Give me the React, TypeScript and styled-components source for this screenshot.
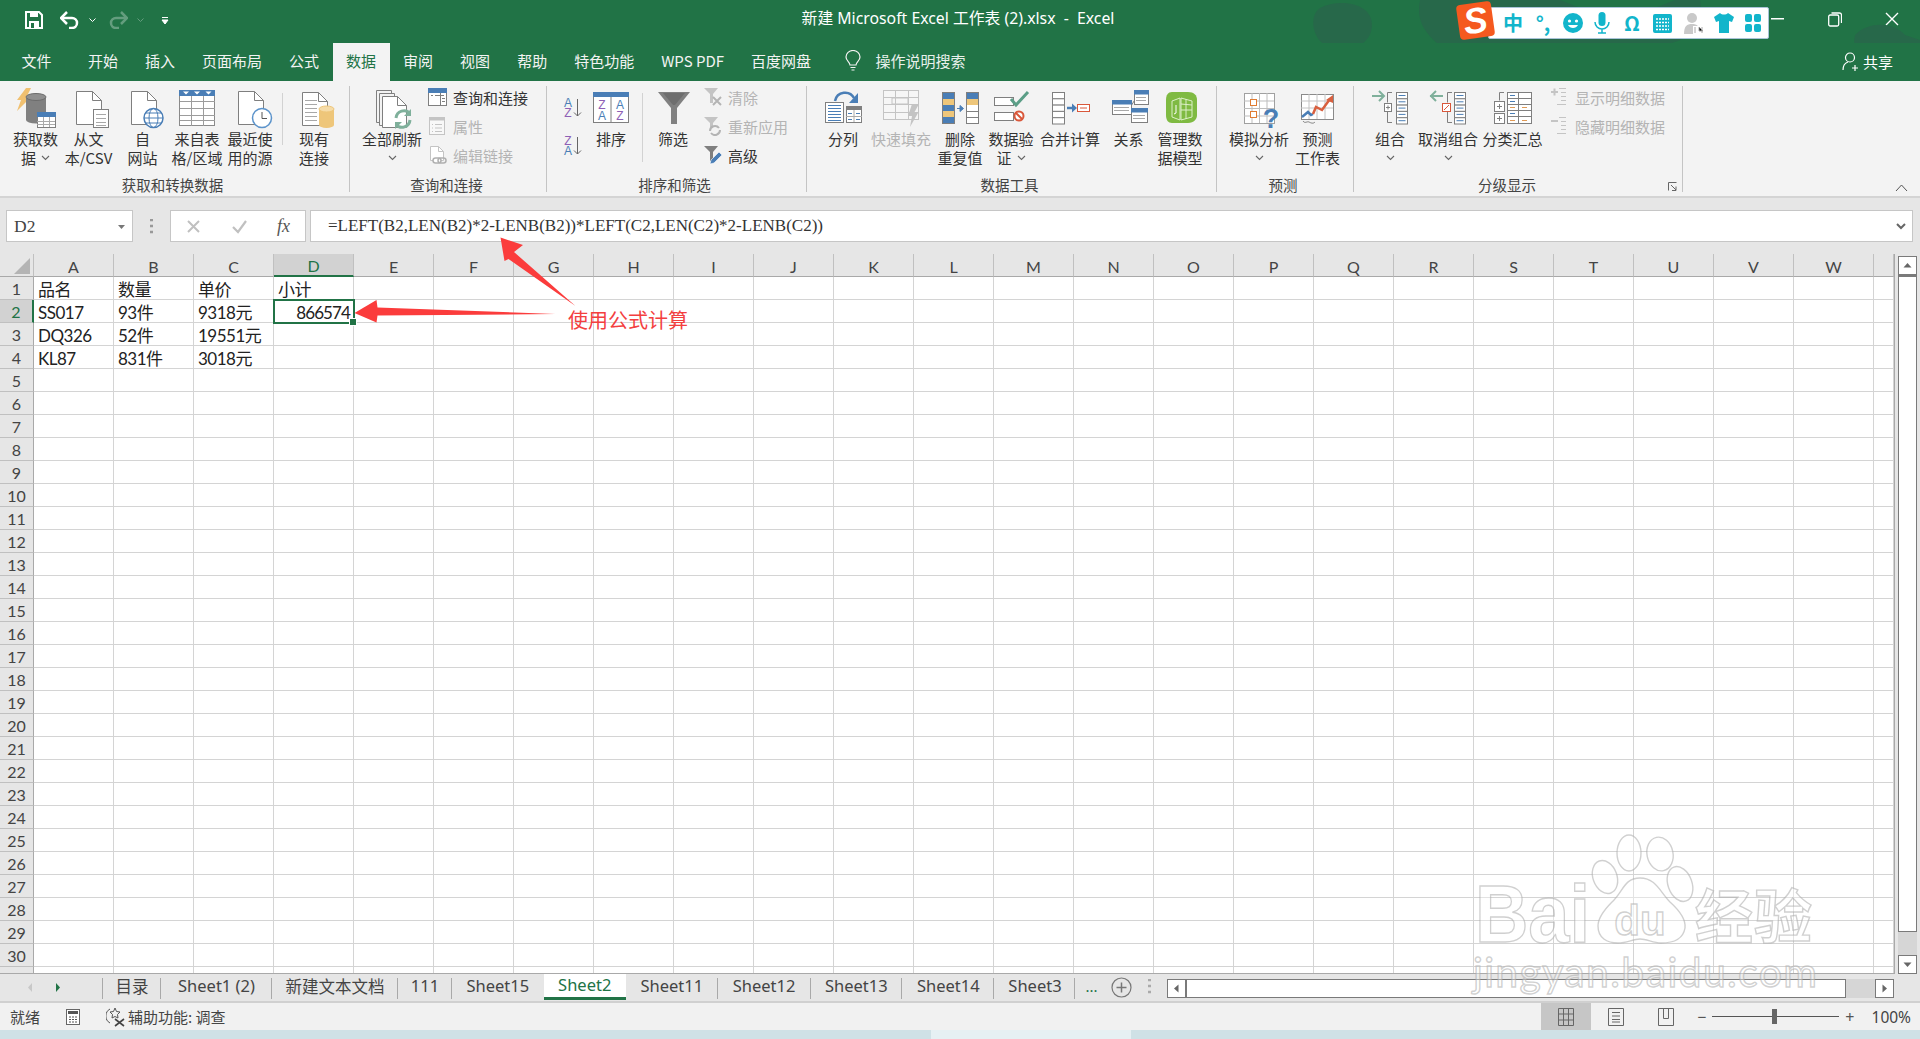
import React from "react";
import styled, { createGlobalStyle } from "styled-components";

const CJK = `"Noto Sans CJK SC", "Noto Sans", sans-serif`;
const GREEN = "#217346";
const G = "#7f7f7f";
const B = "#4a7eb6";
const Y = "#eec67a";
const P = "#8e5fb5";
const LG = "#c4c4c4";

const Global = createGlobalStyle`
  html, body { margin: 0; padding: 0; background: #e6e6e6; }
  #root { width: 1920px; height: 1039px; }
`;

const Page = styled.div`
  position: relative; width: 1920px; height: 1039px; overflow: hidden;
  display: flex; flex-direction: column; font-family: ${CJK}; color: #333; background: #e6e6e6;
`;
const TitleBar = styled.div`
  position: relative; height: 43px; flex: none; background: ${GREEN}; display: flex; align-items: center; color: #fff;
`;
const Qat = styled.div`flex: 1; display: flex; align-items: center; padding-bottom: 3px;`;
const QatIcon = styled.svg<{ $ml: number }>`margin-left: ${(p) => p.$ml}px; flex: none; display: block;`;
const TitleText = styled.div`font-size: 15.8px; padding: 0 4px 8px 0; white-space: pre; font-family: "Noto Sans", ${CJK};`;
const WindowControls = styled.div`flex: 1; display: flex; justify-content: flex-end; align-items: center; padding-bottom: 5px;`;
const WinBtn = styled.div`width: 57px; display: flex; justify-content: center;`;
const Blobs = styled.svg`position: absolute; left: 1280px; top: 0; pointer-events: none;`;

const TabsRow = styled.div`
  height: 38px; flex: none; background: ${GREEN}; display: flex; align-items: stretch; padding-left: 8px; position: relative; color: #f3f3f3;
`;
const RibbonTab = styled.div<{ $active?: boolean; $first?: boolean }>`
  padding: 0 13.5px 3px; font-size: 15px; display: flex; align-items: center; white-space: nowrap;
  margin-right: ${(p) => (p.$first ? 9.5 : 0)}px;
  background: ${(p) => (p.$active ? "#f3f3f3" : "transparent")};
  color: ${(p) => (p.$active ? GREEN : "#f3f3f3")};
`;
const SearchHint = styled.div`
  margin-left: 20px; display: flex; align-items: center; gap: 15px; font-size: 15px; color: #e9f1ec; padding-bottom: 3px;
`;
const Share = styled.div`
  margin-left: auto; display: flex; align-items: center; gap: 3px; font-size: 15px; padding-right: 27px; color: #fff; padding-bottom: 1px;
`;

const Ribbon = styled.div`
  height: 117px; flex: none; box-sizing: border-box; background: #f3f3f3; border-bottom: 2px solid #d4d4d4;
  display: flex; padding-top: 5px;
`;
const Group = styled.div<{ $w: number; $pl: number }>`
  position: relative; width: ${(p) => p.$w}px; height: 106px; box-sizing: border-box; flex: none;
  border-right: 1px solid #c4c4c4; padding-left: ${(p) => p.$pl}px; display: flex; flex-direction: column;
`;
const GroupBody = styled.div`height: 88.5px; display: flex; flex: none; align-items: flex-start;`;
const GroupLabel = styled.div<{ $pr: number; $pl: number }>`
  height: 20px; line-height: 20px; text-align: center; font-size: 14.5px; color: #444; white-space: nowrap;
  margin-left: ${(p) => -p.$pl}px; padding-right: ${(p) => p.$pr}px;
`;
const Large = styled.div<{ $w: number }>`
  width: ${(p) => p.$w}px; flex: none; display: flex; flex-direction: column; align-items: center;
`;
const LargeIcon = styled.svg`display: block; overflow: visible; flex: none; margin-bottom: -1px;`;
const Line = styled.div<{ $off?: boolean }>`
  height: 19px; line-height: 19px; font-size: 15px; white-space: nowrap; display: flex; align-items: center; gap: 5px;
  color: ${(p) => (p.$off ? "#b4b4b4" : "#333")};
`;
const SmallCol = styled.div<{ $w: number; $ml?: number }>`
  width: ${(p) => p.$w}px; margin-left: ${(p) => p.$ml ?? 0}px; margin-top: -3.5px; flex: none; display: flex; flex-direction: column;
`;
const SmallRow = styled.div<{ $off?: boolean }>`
  height: 29px; display: flex; align-items: center; font-size: 15px; white-space: nowrap;
  color: ${(p) => (p.$off ? "#b4b4b4" : "#333")};
`;
const SmallIconBox = styled.div`width: 25px; flex: none; display: flex; align-items: center;`;
const GroupDivider = styled.div<{ $ml: number; $h: number }>`
  width: 1px; height: ${(p) => p.$h}px; margin: 7px 0 0 ${(p) => p.$ml}px; background: #d2d2d2; flex: none;
`;
const SortCol = styled.div`width: 34px; flex: none; display: flex; flex-direction: column; align-items: center;`;
const SortGap = styled.div<{ $h: number }>`height: ${(p) => p.$h}px; flex: none;`;
const Launcher = styled.svg`position: absolute; right: 5px; bottom: 1px;`;
const RibbonRest = styled.div`flex: 1; display: flex; justify-content: flex-end; align-items: flex-end; padding: 0 12px 4px 0;`;

const FormulaArea = styled.div`
  height: 56px; flex: none; box-sizing: border-box; padding: 12px 7px 12px 6px; display: flex; background: #e6e6e6;
`;
const NameBox = styled.div`
  width: 127px; box-sizing: border-box; background: #fff; border: 1px solid #c6c6c6; display: flex; align-items: center;
  justify-content: space-between; padding: 0 6px 0 7px; font: 17.5px "Liberation Serif", serif; color: #444;
`;
const Dots = styled.div`width: 37px; display: flex; justify-content: center; align-items: center;`;
const FxBox = styled.div`
  width: 136px; box-sizing: border-box; background: #fff; border: 1px solid #c6c6c6; display: flex; align-items: center;
  justify-content: space-between; padding: 0 15px 0 15px; color: #bbb;
`;
const FxMark = styled.span`font: italic 18px "Liberation Serif", serif; color: #555;`;
const FormulaInput = styled.div`
  flex: 1; margin-left: 4px; box-sizing: border-box; background: #fff; border: 1px solid #c6c6c6; display: flex; align-items: center;
  justify-content: space-between; padding: 0 6px 0 17px; font: 17px "Liberation Serif", serif; color: #333; white-space: nowrap;
`;

const SheetArea = styled.div`height: 720px; flex: none; display: flex; background: #e6e6e6;`;
const Sheet = styled.div`
  width: 1895px; height: 720px; flex: none; overflow: hidden; display: grid; box-sizing: border-box;
  grid-template-columns: 34px repeat(23, 80px) 20px; grid-template-rows: 23px repeat(31, 23px);
  border-right: 1px solid #a9a9a9; border-bottom: 1px solid #a9a9a9;
  font-family: Lato, ${CJK};
`;
const Corner = styled.div`position: relative; background: #e6e6e6; border-bottom: 1px solid #a9a9a9; border-right: 1px solid #c0c0c0;`;
const CornerMark = styled.svg`position: absolute; left: 14px; top: 4px;`;
const ColHead = styled.div<{ $sel?: boolean }>`
  box-sizing: border-box; display: flex; align-items: center; justify-content: center; font-size: 16px; padding-top: 2px;
  border-right: 1px solid #c0c0c0;
  border-bottom: ${(p) => (p.$sel ? `2px solid ${GREEN}` : "1px solid #a9a9a9")};
  background: ${(p) => (p.$sel ? "#d2d2d2" : "#e6e6e6")};
  color: ${(p) => (p.$sel ? GREEN : "#444")};
`;
const RowHead = styled.div<{ $sel?: boolean }>`
  box-sizing: border-box; display: flex; align-items: center; justify-content: center; font-size: 16px;
  border-bottom: 1px solid #c0c0c0;
  border-right: ${(p) => (p.$sel ? `2px solid ${GREEN}` : "1px solid #a9a9a9")};
  background: ${(p) => (p.$sel ? "#d2d2d2" : "#e6e6e6")};
  color: ${(p) => (p.$sel ? GREEN : "#444")};
`;
const Cell = styled.div<{ $active?: boolean }>`
  position: relative; box-sizing: border-box; background: #fff; border-right: 1px solid #d4d4d4; border-bottom: 1px solid #d4d4d4;
  font-size: 17px; letter-spacing: -0.5px; line-height: 25px; padding: 0 3px 0 4px; white-space: nowrap; color: #222;
  ${(p) => (p.$active ? `text-align: right; letter-spacing: -0.9px; outline: 2px solid ${GREEN}; outline-offset: -1px; z-index: 2;` : "")}
`;
const FillHandle = styled.div`
  position: absolute; right: -4px; bottom: -4px; width: 6px; height: 6px; background: ${GREEN}; border: 1px solid #fff;
`;
const VScroll = styled.div`width: 25px; flex: none; padding: 2px 3px 0 3px; box-sizing: border-box; display: flex; flex-direction: column;`;
const ScrollBtn = styled.div`
  width: 19px; height: 19px; flex: none; box-sizing: border-box; background: #fff; border: 1px solid #7a7a7a; display: flex; align-items: center; justify-content: center;
`;
const VThumb = styled.div`height: 657px; flex: none; box-sizing: border-box; background: #fff; border: 1px solid #7a7a7a; border-top-width: 2px;`;
const VTrack = styled.div`flex: 1; background: #d6d6d6;`;

const TabBar = styled.div`
  height: 29px; flex: none; box-sizing: border-box; display: flex; align-items: flex-start; background: #e6e6e6; border-bottom: 2px solid #d0d0d0;
`;
const TabNav = styled.div`width: 102px; flex: none; height: 26px; display: flex; align-items: center; gap: 19px; padding-left: 26px; box-sizing: border-box;`;
const SheetTab = styled.div<{ $w: number; $active?: boolean; $sep?: boolean }>`
  width: ${(p) => p.$w}px; flex: none; box-sizing: border-box; height: 26px; display: flex; align-items: center; justify-content: center;
  font: 16.5px "Noto Sans", ${CJK}; white-space: nowrap; position: relative; padding-bottom: 3px; color: ${(p) => (p.$active ? GREEN : "#444")};
  background: ${(p) => (p.$active ? "#fff" : "transparent")};
  border-bottom: ${(p) => (p.$active ? `3px solid ${GREEN}` : "0")};
  &::after {
    content: ""; position: absolute; right: 0; top: 4px; height: 21px; width: 1px; background: ${(p) => (p.$sep ? "#a9a9a9" : "transparent")};
  }
`;
const TabStart = styled.div`width: 1px; height: 21px; margin-top: 4px; background: #a9a9a9; flex: none;`;
const More = styled.div`margin-left: 10px; width: 16px; font: 15px "Noto Sans", sans-serif; color: ${GREEN}; padding-top: 2px; flex: none;`;
const AddSheet = styled.svg`margin: 3px 0 0 10px; flex: none;`;
const TabGrip = styled.svg`margin: 5px 0 0 16px; flex: none;`;
const HScroll = styled.div`margin: 5px 0 0 16px; width: 727px; height: 19px; display: flex; flex: none;`;
const HThumb = styled.div`width: 660px; flex: none; box-sizing: border-box; background: #fff; border: 1px solid #7a7a7a;`;
const HTrack = styled.div`flex: 1; background: #d6d6d6;`;

const StatusBar = styled.div`
  height: 27px; flex: none; background: #f1f1f1; display: flex; align-items: center; font-size: 15px; color: #444;
`;
const StatusText = styled.span<{ $ml: number }>`margin-left: ${(p) => p.$ml}px; white-space: nowrap;`;
const StatusIcon = styled.svg<{ $ml: number }>`margin-left: ${(p) => p.$ml}px; flex: none;`;
const StatusRight = styled.div`margin-left: auto; display: flex; align-items: center; height: 100%;`;
const ViewBtn = styled.div<{ $on?: boolean }>`
  width: 50px; height: 100%; display: flex; align-items: center; justify-content: center; background: ${(p) => (p.$on ? "#c6c6c6" : "transparent")};
`;
const ZoomSlider = styled.div`
  margin: 0 0 0 6px; display: flex; align-items: center; font: 16px "Noto Sans", sans-serif; gap: 6px; color: #555;
`;
const SliderTrack = styled.div`position: relative; width: 127px; height: 1px; background: #555;`;
const SliderThumb = styled.div`position: absolute; left: 60px; top: -7px; width: 5px; height: 15px; background: #666;`;
const ZoomPct = styled.span`margin: 0 9px 0 17px; font: 15.5px "Noto Sans", sans-serif; color: #444;`;

const Desktop = styled.div`flex: 1; display: flex; background: #cfe1e6;`;
const DesktopLight = styled.div`width: 200px; margin-left: 931px; background: #e6f0f3;`;

const IME = styled.div`
  position: absolute; left: 1488px; top: 7px; width: 281px; height: 32px; box-sizing: border-box; background: #fff; border: 1px solid #a9c4d8; border-radius: 2px;
  display: flex; align-items: center; padding-left: 9px; color: #12b5cb; z-index: 5;
`;
const ImeLogo = styled.div`
  position: absolute; left: 1458px; top: 3px; width: 35px; height: 35px; border-radius: 4px; transform: rotate(-8deg); background: #f5591f;
  z-index: 6; color: #fff; font: italic 900 36px "Liberation Sans", sans-serif; display: flex; align-items: center; justify-content: center;
`;
const ImeSlot = styled.div<{ $w: number }>`
  width: ${(p) => p.$w}px; flex: none; display: flex; align-items: center; justify-content: center; font: 700 20px ${CJK}; line-height: 24px;
`;
const Annotation = styled.svg`position: absolute; left: 0; top: 0; pointer-events: none; z-index: 8;`;
const AnnotationLabel = styled.div`
  position: absolute; left: 568px; top: 305px; font-size: 20px; line-height: 30px; color: #f33f3f; white-space: nowrap; z-index: 8;
`;

const Chev = () => (
  <svg width="9" height="6" viewBox="0 0 9 6"><path d="M1 1l3.5 3.5L8 1" fill="none" stroke="#666" strokeWidth="1.1" /></svg>
);

const Ic = ({ x, w, children }: { x: number; w: number; children: React.ReactNode }) => (
  <LargeIcon width={w} height={44} viewBox={`${x} 86 ${w} 44`}>{children}</LargeIcon>
);

const Doc = ({ x, y = 91, w = 25, h = 33, s = G }: any) => (
  <g fill="#fff" stroke={s}>
    <path d={`M${x + 0.5} ${y + 0.5}h${w - 9}l9 9v${h - 9}h-${w}z`} />
    <path d={`M${x + w - 8.5} ${y + 0.5}v9h9`} fill="none" />
  </g>
);
const Rows = ({ x, y, w, ys, c = "#a8a8a8" }: any) => (
  <g stroke={c}>{ys.map((d: number) => <path key={d} d={`M${x} ${y + d + 0.5}h${w}`} />)}</g>
);
const MiniTable = ({ x, y, w, h, head = B }: any) => (
  <g>
    <rect x={x + 0.5} y={y + 0.5} width={w} height={h} fill="#fff" stroke={G} />
    <rect x={x} y={y} width={w + 1} height="4.5" fill={head} />
  </g>
);
const Stack = ({ x, y, w, cells }: any) => (
  <g>{cells.map((c: string, i: number) => <rect key={i} x={x + 0.5} y={y + i * 6.3 + 0.5} width={w} height="6.3" fill={c} stroke={G} />)}</g>
);
const Outline = ({ x }: { x: number }) => (
  <g>
    <Stack x={x} y={92} w={11} cells={["#fff", "#fff", "#fff", "#fff", "#fff"]} />
    {[0, 1, 2, 3, 4].map((i) => <path key={i} d={`M${x + 2.5} ${95.5 + i * 6.3}h7`} stroke={B} />)}
  </g>
);

const icons: Record<string, React.ReactNode> = {
  getData: (
    <Ic x={9} w={53}>
      <path d="M26 88h5l-5 10h4L17 111l4-11h-4z" fill="#f0c070" />
      <path d="M26 98v22a10 3.5 0 0 0 20 0V98z" fill="#808080" />
      <ellipse cx="36" cy="97" rx="10" ry="3.5" fill="#8f8f8f" stroke="#6c6c6c" />
      <rect x="37.5" y="112.5" width="18" height="15" fill="#fff" stroke={G} />
      <rect x="37" y="112" width="19" height="5" fill={B} />
      <path d="M37 121.5h18M37 124.5h18M43.5 117v10M49.5 117v10" stroke="#aaa" />
    </Ic>
  ),
  fromText: (
    <Ic x={62} w={53}>
      <Doc x={76} />
      <rect x="93.5" y="109.5" width="15" height="18" fill="#fff" stroke={G} />
      <Rows x={96} y={113} w={10} ys={[1, 5, 9, 12]} />
    </Ic>
  ),
  web: (
    <Ic x={115} w={55}>
      <Doc x={131} />
      <circle cx="153.5" cy="118" r="9.5" fill="#fff" stroke={B} strokeWidth="1.5" />
      <ellipse cx="153.5" cy="118" rx="4.5" ry="9.5" fill="none" stroke={B} />
      <path d="M144 118h19M145.5 113h16M145.5 123h16" stroke={B} />
    </Ic>
  ),
  table: (
    <Ic x={170} w={54}>
      <rect x="179.5" y="90.5" width="35" height="35" fill="#fff" stroke="#8a8a8a" />
      <rect x="179" y="90" width="36" height="6" fill={B} />
      <path d="M183 91.5h6l-3 3zM194 91.5h6l-3 3zM205.500 91.5h6l-3 3z" fill="#fff" />
      <path d="M191.500 96v30M203.500 96v30M180 101.500h35M180 108.500h35M180 115.500h35M180 120.500h35" stroke="#9c9c9c" />
    </Ic>
  ),
  recent: (
    <Ic x={224} w={52}>
      <Doc x={238} />
      <circle cx="262" cy="118" r="9.500" fill="#fff" stroke="#5b93cb" strokeWidth="1.5" />
      <path d="M262 112v6.500h5" fill="none" stroke="#555" />
    </Ic>
  ),
  existing: (
    <Ic x={283} w={62}>
      <Doc x={302} y={92} />
      <Rows x={305} y={100} w={12} ys={[0, 4, 8, 12, 16, 20]} />
      <path d="M319 110v15a7.500 3 0 0 0 15 0v-15z" fill={Y} />
      <ellipse cx="326.500" cy="109" rx="7.500" ry="3" fill="#f6dca8" stroke={Y} />
    </Ic>
  ),
  refresh: (
    <Ic x={360} w={64}>
      <path d="M376.500 90.500h15v3M376.500 90.500v32h3" fill="none" stroke={G} />
      <path d="M379.500 93.500h15v3M379.500 93.500v32h3" fill="none" stroke={G} />
      <Doc x={382} y={96} w={24} h={31} />
      <path d="M396 118a8 8 0 0 1 14-4.500" fill="none" stroke="#7fb09b" strokeWidth="3" />
      <path d="M411 109v7h-7z" fill="#7fb09b" />
      <path d="M410 120a8 8 0 0 1-14 4.500" fill="none" stroke="#7fb09b" strokeWidth="3" />
      <path d="M395 129v-7h7z" fill="#7fb09b" />
    </Ic>
  ),
  sortBig: (
    <Ic x={589} w={44}>
      <rect x="593.500" y="92.500" width="35" height="30" fill="#fff" stroke={G} />
      <rect x="593" y="92" width="36" height="5" fill={B} />
      <path d="M611 97v25" stroke={G} />
      <text x="602" y="109" fontFamily="Liberation Sans" fontSize="12" textAnchor="middle" fill={P}>Z</text>
      <text x="602" y="120" fontFamily="Liberation Sans" fontSize="12" textAnchor="middle" fill={B}>A</text>
      <text x="620" y="109" fontFamily="Liberation Sans" fontSize="12" textAnchor="middle" fill={B}>A</text>
      <text x="620" y="120" fontFamily="Liberation Sans" fontSize="12" textAnchor="middle" fill={P}>Z</text>
    </Ic>
  ),
  funnel: (
    <Ic x={643} w={60}>
      <path d="M658 92h32l-13 16v16h-6v-16z" fill="#808080" />
      <path d="M663 93h22l-10 12h-2z" fill="#6e6e6e" />
    </Ic>
  ),
  split: (
    <Ic x={815} w={56}>
      <rect x="825.500" y="102.500" width="18" height="20" fill="#fff" stroke={G} />
      <Rows x={828} y={105} w={13} ys={[0, 3, 6, 9, 12, 15]} c={B} />
      <rect x="846.500" y="106.500" width="15" height="16" fill="#fff" stroke={G} />
      <rect x="846" y="106" width="16" height="4" fill={G} />
      <path d="M854 110v12M846 116.500h16" stroke="#aaa" />
      <path d="M848 113.500h4M856 113.500h4M848 119.500h4M856 119.500h4" stroke={B} />
      <path d="M835 101c2-10 15-11 19-3" fill="none" stroke={B} strokeWidth="2.500" />
      <path d="M858 93v10h-9z" fill={B} />
    </Ic>
  ),
  flash: (
    <Ic x={871} w={60}>
      <rect x="883.500" y="90.500" width="35" height="29" fill="#f6f6f6" stroke={LG} />
      <path d="M883 97.500h35M883 104.500h35M883 112.500h35M895.500 90v29M908.500 90v29" stroke={LG} />
      <rect x="892" y="98" width="16" height="6" fill="none" stroke={LG} />
      <path d="M912 104h7l-5 9h4l-8 14 2-11h-4z" fill={LG} />
    </Ic>
  ),
  dedupe: (
    <Ic x={931} w={58}>
      <rect x="942.500" y="92.500" width="12" height="31" fill={B} stroke={G} />
      <rect x="943" y="99" width="11" height="6" fill={Y} />
      <rect x="943" y="111" width="11" height="6" fill={Y} />
      <rect x="966.500" y="92.500" width="12" height="31" fill="#fff" stroke={G} />
      <rect x="967" y="93" width="11" height="6" fill={B} />
      <rect x="967" y="99" width="11" height="6" fill={Y} />
      <path d="M966 111.500h12M966 117.500h12" stroke={G} />
      <path d="M957 108.500h3M960 105.500l3.500 3-3.500 3z" stroke={B} fill={B} />
    </Ic>
  ),
  validate: (
    <Ic x={989} w={44}>
      <rect x="994.500" y="97.500" width="19" height="8" fill="#fff" stroke={G} />
      <rect x="994.500" y="112.500" width="19" height="8" fill="#fff" stroke={G} />
      <path d="M1011 99l5 6 12-13" fill="none" stroke="#5b9e87" strokeWidth="3" />
      <circle cx="1019" cy="116" r="4.500" fill="#fff" stroke="#d9573a" strokeWidth="2" />
      <path d="M1016 113l6 6" stroke="#d9573a" strokeWidth="2" />
    </Ic>
  ),
  consolidate: (
    <Ic x={1033} w={74}>
      <Stack x={1052} y={92} w={12} cells={["#fff", "#fff", "#fff", "#fff", "#fff"]} />
      <path d="M1067 108h6" stroke={B} strokeWidth="2.500" />
      <path d="M1072 103.500l5 4.500-5 4.500z" fill={B} />
      <rect x="1077.500" y="104.500" width="12" height="7" fill="#fff" stroke="#d9573a" />
      <path d="M1080 108h7" stroke="#d9573a" />
    </Ic>
  ),
  relation: (
    <Ic x={1107} w={43}>
      <path d="M1131 106l5-8M1131 108l5 5" stroke={G} fill="none" />
      <MiniTable x={1112} y={100} w={19} h={14} />
      <Rows x={1114} y={107} w={15} ys={[0, 3]} />
      <MiniTable x={1134} y={90} w={14} h={14} />
      <Rows x={1136} y={97} w={10} ys={[0, 3]} />
      <MiniTable x={1131} y={108} w={16} h={14} />
      <Rows x={1133} y={115} w={12} ys={[0, 3]} />
    </Ic>
  ),
  model: (
    <Ic x={1150} w={60}>
      <path d="M1172 92h16c6 0 9 3 9 8v15c0 4-3 8-9 8h-16c-4 0-6-3-6-8v-15c0-5 2-8 6-8z" fill="#7fba42" />
      <path d="M1172 101l8-3v22l-8-3zM1181 98l11 3v16l-11 3z" fill="none" stroke="#dcefc8" />
      <path d="M1181 104l11 1M1181 110l11 0M1186 99v20" stroke="#dcefc8" />
      <path d="M1176 105v8l-2 1" fill="none" stroke="#fff" />
    </Ic>
  ),
  whatif: (
    <Ic x={1229} w={60}>
      <rect x="1244.500" y="93.500" width="30" height="30" fill="#fff" stroke="#a0a0a0" />
      <path d="M1252 93v30M1259.500 93v30M1267 93v30M1244 101h30M1244 108.500h30M1244 116h30" stroke="#bdbdbd" />
      <rect x="1250.500" y="99.500" width="6" height="6" fill="#fff" stroke="#e07c33" />
      <rect x="1250.500" y="111.500" width="6" height="6" fill="#fff" stroke="#e07c33" />
      <text x="1271" y="128" fontFamily="Liberation Sans" fontWeight="700" fontSize="27" textAnchor="middle" fill={B}>?</text>
    </Ic>
  ),
  forecast: (
    <Ic x={1289} w={57}>
      <rect x="1301.500" y="94.500" width="32" height="25" fill="#fff" stroke="#8a8a8a" />
      <path d="M1309 94v25M1317 94v25M1325 94v25M1301 101h32M1301 108h32" stroke="#c4c4c4" />
      <path d="M1302 117l6-5 3 3 2-1" fill="none" stroke={B} strokeWidth="2.500" />
      <path d="M1313 114l3-7 6 3 8-11" fill="none" stroke="#d9603f" strokeWidth="2.500" />
      <path d="M1333 95v8l-7-3z" fill="#d9603f" />
      <path d="M1303 121c2 3 4 0 6 1s4 2 6 0" fill="none" stroke={G} />
    </Ic>
  ),
  group: (
    <Ic x={1368} w={44}>
      <path d="M1372 96h12M1379 91l5 5-5 5" fill="none" stroke="#7fb09b" strokeWidth="2" />
      <path d="M1392 92.500h-4.500v10M1387.500 112v10.500h4.500" fill="none" stroke={G} />
      <rect x="1384.500" y="103.500" width="7" height="8" fill="#fff" stroke={G} />
      <path d="M1386 107.500h4M1388 105.500v4" stroke={G} />
      <Outline x={1396} />
    </Ic>
  ),
  ungroup: (
    <Ic x={1412} w={72}>
      <path d="M1443 96h-13M1436 91l-5 5 5 5" fill="none" stroke="#7fb09b" strokeWidth="2" />
      <path d="M1452 92.500h-4.500v10M1447.500 112v10.500h4.500" fill="none" stroke={G} />
      <rect x="1442.500" y="103.500" width="8" height="8" fill="#fff" stroke="#d9573a" />
      <path d="M1444 110l5-5" stroke="#d9573a" />
      <Outline x={1454} />
    </Ic>
  ),
  subtotal: (
    <Ic x={1484} w={57}>
      <rect x="1507.500" y="92.500" width="24" height="31" fill="#fff" stroke={G} />
      <path d="M1518.500 92v31M1507 98.500h24M1507 104.500h24M1507 110.500h24M1507 116.500h24" stroke={G} />
      <path d="M1510 95.500h5M1510 101.500h5M1510 113.500h5" stroke={B} />
      <path d="M1510 107.500h5M1522 107.500h5M1510 120.500h5M1522 120.500h5" stroke="#e09a55" />
      <path d="M1504 92.500h-4.500v8" fill="none" stroke={G} />
      <rect x="1494.500" y="101.500" width="10" height="10" fill="#fff" stroke={G} />
      <rect x="1494.500" y="113.500" width="10" height="10" fill="#fff" stroke={G} />
      <path d="M1497 106.500h5M1499.500 104v5M1497 118.500h5M1499.500 116v5" stroke={G} />
    </Ic>
  ),
};

const Sm = ({ children, w = 20, h = 20 }: any) => <svg width={w} height={h} viewBox="0 0 20 20">{children}</svg>;
const smallIcons: Record<string, React.ReactNode> = {
  queries: (
    <Sm>
      <rect x=".5" y="1.500" width="18" height="17" fill="#fff" stroke={G} />
      <rect x="0" y="1" width="19" height="5" fill={B} />
      <path d="M3 8.500h2M7 8.500h9M12.500 6v12M14 11.500h3M14 14.500h3" stroke={G} />
    </Sm>
  ),
  props: (
    <Sm>
      <rect x="1.500" y="1.500" width="15" height="17" fill="#f8f8f8" stroke={LG} />
      <rect x="1" y="1" width="16" height="3.500" fill={LG} />
      <path d="M7 8.500h7M7 12h7M7 15.500h7M4 8.500h1M4 12h1M4 15.500h1" stroke={LG} />
    </Sm>
  ),
  links: (
    <Sm>
      <path d="M2.500 1.500h8l5 5v9h-13z" fill="#fff" stroke={LG} />
      <path d="M10.500 1.500v5h5" fill="none" stroke={LG} />
      <rect x="5" y="13" width="8" height="5" rx="2.500" fill="#fff" stroke="#b0b0b0" strokeWidth="1.500" />
      <rect x="10" y="13" width="8" height="5" rx="2.500" fill="none" stroke="#b0b0b0" strokeWidth="1.500" />
    </Sm>
  ),
  clear: (
    <Sm>
      <path d="M1 1h14l-5 6v9H7V7z" fill={LG} />
      <path d="M10 10l8 8M18 10l-8 8" stroke="#b4b4b4" strokeWidth="2" />
    </Sm>
  ),
  reapply: (
    <Sm>
      <path d="M1 1h14l-5 6v4H7V7z" fill={LG} />
      <path d="M7 15a5 5 0 0 1 9-3M17 14a5 5 0 0 1-9 3" fill="none" stroke="#b4b4b4" strokeWidth="2" />
    </Sm>
  ),
  advanced: (
    <Sm>
      <path d="M1 1h14l-5 6v9H7V7z" fill={G} />
      <path d="M7 19l1-4 8-8 3 3-8 8z" fill={B} stroke="#fff" strokeWidth=".6" />
    </Sm>
  ),
  show: (
    <Sm>
      <path d="M1 5h7M4.500 1.500v7" stroke={LG} strokeWidth="2" />
      <path d="M9 1.500h7M11 5.500h5M11 9.500h5M11 13.500h5M7 17.500h9" stroke={LG} />
    </Sm>
  ),
  hide: (
    <Sm>
      <path d="M1 5h7" stroke={LG} strokeWidth="2" />
      <path d="M9 1.500h7M11 5.500h5M11 9.500h5M11 13.500h5M7 17.500h9" stroke={LG} />
    </Sm>
  ),
};

type Item =
  | { k: "large"; w: number; icon: string; lines: string[]; chev?: "inline" | "below"; off?: boolean }
  | { k: "small"; w: number; ml?: number; rows: { icon: string; t: string; off?: boolean }[] }
  | { k: "div"; ml: number; h: number }
  | { k: "sort" };

const groups: { w: number; pl: number; label: string; pr: number; launcher?: boolean; items: Item[] }[] = [
  {
    w: 350, pl: 9, label: "获取和转换数据", pr: 4,
    items: [
      { k: "large", w: 53, icon: "getData", lines: ["获取数", "据"], chev: "inline" },
      { k: "large", w: 53, icon: "fromText", lines: ["从文", "本/CSV"] },
      { k: "large", w: 55, icon: "web", lines: ["自", "网站"] },
      { k: "large", w: 54, icon: "table", lines: ["来自表", "格/区域"] },
      { k: "large", w: 52, icon: "recent", lines: ["最近使", "用的源"] },
      { k: "div", ml: 6, h: 52 },
      { k: "large", w: 62, icon: "existing", lines: ["现有", "连接"] },
    ],
  },
  {
    w: 197, pl: 10, label: "查询和连接", pr: 3,
    items: [
      { k: "large", w: 64, icon: "refresh", lines: ["全部刷新"], chev: "below" },
      { k: "small", w: 120, ml: 4, rows: [
        { icon: "queries", t: "查询和连接" },
        { icon: "props", t: "属性", off: true },
        { icon: "links", t: "编辑链接", off: true },
      ] },
    ],
  },
  {
    w: 260, pl: 8, label: "排序和筛选", pr: 4,
    items: [
      { k: "sort" },
      { k: "large", w: 44, icon: "sortBig", lines: ["排序"] },
      { k: "div", ml: 9, h: 69 },
      { k: "large", w: 60, icon: "funnel", lines: ["筛选"] },
      { k: "small", w: 100, rows: [
        { icon: "clear", t: "清除", off: true },
        { icon: "reapply", t: "重新应用", off: true },
        { icon: "advanced", t: "高级" },
      ] },
    ],
  },
  {
    w: 410, pl: 8, label: "数据工具", pr: 4,
    items: [
      { k: "large", w: 56, icon: "split", lines: ["分列"] },
      { k: "large", w: 60, icon: "flash", lines: ["快速填充"], off: true },
      { k: "large", w: 58, icon: "dedupe", lines: ["删除", "重复值"] },
      { k: "large", w: 44, icon: "validate", lines: ["数据验", "证"], chev: "inline" },
      { k: "large", w: 74, icon: "consolidate", lines: ["合并计算"] },
      { k: "large", w: 43, icon: "relation", lines: ["关系"] },
      { k: "large", w: 60, icon: "model", lines: ["管理数", "据模型"] },
    ],
  },
  {
    w: 137, pl: 12, label: "预测", pr: 4,
    items: [
      { k: "large", w: 60, icon: "whatif", lines: ["模拟分析"], chev: "below" },
      { k: "large", w: 57, icon: "forecast", lines: ["预测", "工作表"] },
    ],
  },
  {
    w: 329, pl: 14, label: "分级显示", pr: 22, launcher: true,
    items: [
      { k: "large", w: 44, icon: "group", lines: ["组合"], chev: "below" },
      { k: "large", w: 72, icon: "ungroup", lines: ["取消组合"], chev: "below" },
      { k: "large", w: 57, icon: "subtotal", lines: ["分类汇总"] },
      { k: "small", w: 130, ml: 9, rows: [
        { icon: "show", t: "显示明细数据", off: true },
        { icon: "hide", t: "隐藏明细数据", off: true },
      ] },
    ],
  },
];

const SortIcon = ({ top, bottom }: { top: [string, string]; bottom: [string, string] }) => (
  <svg width="20" height="29" viewBox="0 0 20 29">
    <text x="6" y="13" fontFamily="Liberation Sans" fontSize="12" textAnchor="middle" fill={top[1]}>{top[0]}</text>
    <text x="6" y="23" fontFamily="Liberation Sans" fontSize="12" textAnchor="middle" fill={bottom[1]}>{bottom[0]}</text>
    <path d="M15.500 5v17M12 18.500l3.500 3.500 3.500-3.500" fill="none" stroke="#666" />
  </svg>
);

const renderItem = (it: Item, i: number) => {
  if (it.k === "div") return <GroupDivider key={i} $ml={it.ml} $h={it.h} />;
  if (it.k === "sort")
    return (
      <SortCol key={i}>
        <SortGap $h={8} />
        <SortIcon top={["A", B]} bottom={["Z", P]} />
        <SortGap $h={9} />
        <SortIcon top={["Z", P]} bottom={["A", B]} />
      </SortCol>
    );
  if (it.k === "small")
    return (
      <SmallCol key={i} $w={it.w} $ml={it.ml}>
        {it.rows.map((r) => (
          <SmallRow key={r.t} $off={r.off}>
            <SmallIconBox>{smallIcons[r.icon]}</SmallIconBox>
            {r.t}
          </SmallRow>
        ))}
      </SmallCol>
    );
  return (
    <Large key={i} $w={it.w}>
      {icons[it.icon]}
      {it.lines.map((l, j) => (
        <Line key={l} $off={it.off}>
          {l}
          {it.chev === "inline" && j === 1 && <Chev />}
        </Line>
      ))}
      {it.chev === "below" && <Line><Chev /></Line>}
    </Large>
  );
};

const colLetters = "ABCDEFGHIJKLMNOPQRSTUVW".split("").concat("X");
const data: Record<string, string> = {
  A1: "品名", B1: "数量", C1: "单价", D1: "小计",
  A2: "SS017", B2: "93件", C2: "9318元", D2: "866574",
  A3: "DQ326", B3: "52件", C3: "19551元",
  A4: "KL87", B4: "831件", C4: "3018元",
};
const rows = Array.from({ length: 31 }, (_, i) => i + 1);
const tabs = [
  ["目录", 58], ["Sheet1 (2)", 111], ["新建文本文档", 126], ["111", 54], ["Sheet15", 91.5],
  ["Sheet2", 82.5], ["Sheet11", 91.5], ["Sheet12", 93], ["Sheet13", 91.6], ["Sheet14", 92.4], ["Sheet3", 81],
] as [string, number][];
const ribbonTabs = ["开始", "插入", "页面布局", "公式", "数据", "审阅", "视图", "帮助", "特色功能", "WPS PDF", "百度网盘"];

const Tri = ({ d, c = "#666" }: { d: string; c?: string }) => (
  <svg width="9" height="9" viewBox="0 0 9 9"><path d={d} fill={c} /></svg>
);

export default function App() {
  return (
    <Page>
      <Global />
      <TitleBar>
        <Qat>
          <QatIcon $ml={25} width="18" height="18" viewBox="0 0 18 18">
            <path d="M1 1h13l3 3v13H1z" fill="none" stroke="#fff" strokeWidth="2" />
            <path d="M5 1h8v5H5zM4 10h10v7H4z" fill="#fff" />
            <rect x="6" y="12" width="3" height="5" fill={GREEN} />
          </QatIcon>
          <QatIcon $ml={17} width="20" height="18" viewBox="0 0 20 18">
            <path d="M2 7h10a5 5 0 0 1 0 10H9" fill="none" stroke="#fff" strokeWidth="2.500" />
            <path d="M7 1L1 7l6 6" fill="none" stroke="#fff" strokeWidth="2.500" />
          </QatIcon>
          <QatIcon $ml={8.5} width="7" height="5" viewBox="0 0 7 5"><path d="M.5.5l3 3 3-3" fill="none" stroke="#fff" /></QatIcon>
          <QatIcon $ml={12} width="20" height="18" viewBox="0 0 20 18" opacity=".3">
            <path d="M18 7H8a5 5 0 0 0 0 10h3" fill="none" stroke="#fff" strokeWidth="2.500" />
            <path d="M13 1l6 6-6 6" fill="none" stroke="#fff" strokeWidth="2.500" />
          </QatIcon>
          <QatIcon $ml={9} width="7" height="5" viewBox="0 0 7 5" opacity=".3"><path d="M.5.5l3 3 3-3" fill="none" stroke="#fff" /></QatIcon>
          <QatIcon $ml={17.5} width="8" height="9" viewBox="0 0 8 9"><path d="M1 1.500h6M1 4h6L4 8z" stroke="#fff" fill="#fff" /></QatIcon>
        </Qat>
        <TitleText>{"新建 Microsoft Excel 工作表 (2).xlsx  -  Excel"}</TitleText>
        <WindowControls>
          <WinBtn><svg width="13" height="2"><rect width="13" height="1.500" fill="#fff" /></svg></WinBtn>
          <WinBtn>
            <svg width="14" height="15" viewBox="0 0 14 15">
              <rect x=".7" y="3" width="10" height="11" rx="1.500" fill="none" stroke="#fff" strokeWidth="1.300" />
              <path d="M3.500 1h8a2 2 0 0 1 2 2v8" fill="none" stroke="#fff" strokeWidth="1.300" />
            </svg>
          </WinBtn>
          <WinBtn>
            <svg width="14" height="14" viewBox="0 0 14 14"><path d="M1 1l12 12M13 1L1 13" stroke="#fff" strokeWidth="1.400" /></svg>
          </WinBtn>
        </WindowControls>
      </TitleBar>
      <Blobs width="640" height="81" viewBox="0 0 640 81">
        <g fill="#27684a">
          <path d="M40 8c15-8 35-6 45 2s9 25-2 33-35 7-43-2-10-26 0-33z" />
          <path d="M140 0h140l25 10c12 12 40 8 60 2l30-12h25c5 25-10 42-40 45-25 10-50 5-75 0-20 15-30 17-45 10s-30 15-50 8-30-10-45-12c-15-15-30-25-25-51z" />
          <path d="M575 35c15-15 40-12 50 0l15 5v40h-35c-15-10-35-25-30-45z" />
        </g>
      </Blobs>
      <TabsRow>
        <RibbonTab $first>文件</RibbonTab>
        {ribbonTabs.map((t) => <RibbonTab key={t} $active={t === "数据"}>{t}</RibbonTab>)}
        <SearchHint>
          <svg width="16" height="21" viewBox="0 0 16 21" fill="none" stroke="#f3f3f3" strokeWidth="1.200">
            <path d="M5 15c0-3-4-4-4-8a7 6.500 0 0 1 14 0c0 4-4 5-4 8z" />
            <path d="M5.500 17.500h5M6.500 20h3" />
          </svg>
          操作说明搜索
        </SearchHint>
        <Share>
          <svg width="18" height="19" viewBox="0 0 18 19" fill="none" stroke="#fff" strokeWidth="1.200">
            <circle cx="8" cy="5.500" r="4.500" />
            <path d="M1 18c0-4 2-7 5-8M13 13v6M10 16h6" />
          </svg>
          共享
        </Share>
      </TabsRow>
      <Ribbon>
        {groups.map((g) => (
          <Group key={g.label} $w={g.w} $pl={g.pl}>
            <GroupBody>{g.items.map(renderItem)}</GroupBody>
            <GroupLabel $pr={g.pr} $pl={g.pl}>{g.label}</GroupLabel>
            {g.launcher && (
              <Launcher width="9" height="9" viewBox="0 0 9 9" fill="none" stroke="#666">
                <path d="M.5 8.500v-8h8M3 3l5 5M8 4.500v4H4" />
              </Launcher>
            )}
          </Group>
        ))}
        <RibbonRest>
          <svg width="13" height="8" viewBox="0 0 13 8"><path d="M1 7l5.500-6L12 7" fill="none" stroke="#555" /></svg>
        </RibbonRest>
      </Ribbon>
      <FormulaArea>
        <NameBox>D2<Tri d="M1 3h7L4.500 7z" c="#777" /></NameBox>
        <Dots>
          <svg width="3" height="15"><path d="M0 1h3M0 7h3M0 13h3" stroke="#999" strokeWidth="2.500" /></svg>
        </Dots>
        <FxBox>
          <svg width="15" height="15" viewBox="0 0 15 15"><path d="M2 2l11 11M13 2L2 13" stroke="#c0c0c0" strokeWidth="2" /></svg>
          <svg width="17" height="15" viewBox="0 0 17 15"><path d="M2 8l5 5L15 2" fill="none" stroke="#c0c0c0" strokeWidth="2.200" /></svg>
          <FxMark>fx</FxMark>
        </FxBox>
        <FormulaInput>
          =LEFT(B2,LEN(B2)*2-LENB(B2))*LEFT(C2,LEN(C2)*2-LENB(C2))
          <svg width="10" height="7" viewBox="0 0 10 7"><path d="M1 1l4 4 4-4" fill="none" stroke="#666" strokeWidth="2" /></svg>
        </FormulaInput>
      </FormulaArea>
      <SheetArea>
        <Sheet>
          <Corner>
            <CornerMark width="16" height="16" viewBox="0 0 16 16"><path d="M16 0v16H0z" fill="#b4b4b4" /></CornerMark>
          </Corner>
          {colLetters.map((c) => <ColHead key={c} $sel={c === "D"}>{c === "X" ? "" : c}</ColHead>)}
          {rows.map((r) => (
            <React.Fragment key={r}>
              <RowHead $sel={r === 2}>{r}</RowHead>
              {colLetters.map((c) => {
                const id = `${c}${r}`;
                return (
                  <Cell key={id} $active={id === "D2"}>
                    {data[id]}
                    {id === "D2" && <FillHandle />}
                  </Cell>
                );
              })}
            </React.Fragment>
          ))}
        </Sheet>
        <VScroll>
          <ScrollBtn><Tri d="M.5 6.500h8L4.500 2z" /></ScrollBtn>
          <VThumb />
          <VTrack />
          <ScrollBtn><Tri d="M.5 2.500h8L4.500 7z" /></ScrollBtn>
        </VScroll>
      </SheetArea>
      <TabBar>
        <TabNav>
          <Tri d="M6 0v9L2 4.500z" c="#c8c8c8" />
          <Tri d="M2 0v9l4-4.500z" c={GREEN} />
        </TabNav>
        <TabStart />
        {tabs.map(([t, w]) => (
          <SheetTab key={t} $w={w} $active={t === "Sheet2"} $sep={t !== "Sheet2" && t !== "Sheet15"}>{t}</SheetTab>
        ))}
        <More>...</More>
        <AddSheet width="21" height="21" viewBox="0 0 21 21" fill="none" stroke="#777">
          <circle cx="10.500" cy="10.500" r="9.500" strokeWidth="1.200" />
          <path d="M5.500 10.500h10M10.500 5.500v10" strokeWidth="1.500" />
        </AddSheet>
        <TabGrip width="3" height="15"><path d="M0 1h3M0 7h3M0 13h3" stroke="#aaa" strokeWidth="2.500" /></TabGrip>
        <HScroll>
          <ScrollBtn><Tri d="M6.500.5v8L2 4.500z" /></ScrollBtn>
          <HThumb />
          <HTrack />
          <ScrollBtn><Tri d="M2.500.5v8L7 4.500z" /></ScrollBtn>
        </HScroll>
      </TabBar>
      <StatusBar>
        <StatusText $ml={10}>就绪</StatusText>
        <StatusIcon $ml={26} width="14" height="16" viewBox="0 0 14 16">
          <rect x=".5" y=".5" width="13" height="15" fill="#fff" stroke="#666" />
          <rect x="2" y="2" width="10" height="3" fill="#555" />
          <path d="M3 8h2M6 8h2M9 8h2M3 10.500h2M6 10.500h2M9 10.500h2M3 13h2M6 13h2M9 13h2" stroke="#555" />
        </StatusIcon>
        <StatusIcon $ml={26} width="20" height="20" viewBox="0 0 20 20" fill="none" stroke="#555">
          <path d="M4 2a8 8 0 0 0 0 14" />
          <path d="M9 1l1.500 3.500 3.500.5-2.500 2.500.5 3.500L9 9.500 6 11l.5-3.500L4 5l3.500-.5z" />
          <path d="M9 12l9 7M18 12l-9 7" strokeWidth="1.600" stroke="#444" />
        </StatusIcon>
        <StatusText $ml={2}>辅助功能: 调查</StatusText>
        <StatusRight>
          <ViewBtn $on>
            <svg width="16" height="18" viewBox="0 0 16 18" fill="none" stroke="#666">
              <path d="M.5.500h15v17H.5zM5.500.5v17M10.500.5v17M.5 6h15M.5 12h15" />
            </svg>
          </ViewBtn>
          <ViewBtn>
            <svg width="16" height="18" viewBox="0 0 16 18" fill="none" stroke="#666">
              <path d="M.5.500h15v17H.5zM4 4.500h8M4 8h8M4 11.500h8M4 14h8" />
            </svg>
          </ViewBtn>
          <ViewBtn>
            <svg width="16" height="18" viewBox="0 0 16 18" fill="none" stroke="#666">
              <path d="M.5.500h15v17H.5zM5.500.5v10h5V.5" />
            </svg>
          </ViewBtn>
          <ZoomSlider>
            −
            <SliderTrack><SliderThumb /></SliderTrack>
            +
          </ZoomSlider>
          <ZoomPct>100%</ZoomPct>
        </StatusRight>
      </StatusBar>
      <Desktop><DesktopLight /></Desktop>

      <ImeLogo>S</ImeLogo>
      <IME>
        <ImeSlot $w={30}>中</ImeSlot>
        <ImeSlot $w={30}>°,</ImeSlot>
        <ImeSlot $w={29.5}>
          <svg width="20" height="20" viewBox="0 0 20 20"><circle cx="10" cy="10" r="10" fill="#12b5cb" /><circle cx="6.500" cy="8" r="1.600" fill="#fff" /><circle cx="13.500" cy="8" r="1.600" fill="#fff" /><path d="M5 12c2 4 8 4 10 0z" fill="#fff" /></svg>
        </ImeSlot>
        <ImeSlot $w={29.5}>
          <svg width="16" height="22" viewBox="0 0 16 22"><rect x="4.500" y="0" width="7" height="14" rx="3.500" fill="#12b5cb" /><path d="M1 10a7 7 0 0 0 14 0M8 17v4M4 21h8" fill="none" stroke="#12b5cb" strokeWidth="1.500" /></svg>
        </ImeSlot>
        <ImeSlot $w={30}>Ω</ImeSlot>
        <ImeSlot $w={30}>
          <svg width="19" height="19" viewBox="0 0 19 19"><rect width="19" height="19" rx="2" fill="#12b5cb" /><path d="M3 5h13M3 8.500h13M3 12h13M3 15.500h13" stroke="#fff" strokeWidth="1.500" strokeDasharray="2 1" /></svg>
        </ImeSlot>
        <ImeSlot $w={33}>
          <svg width="20" height="22" viewBox="0 0 20 22"><circle cx="8" cy="6" r="5" fill="#c9c9c9" /><path d="M0 22c0-8 3-10 8-10s8 2 8 10z" fill="#c9c9c9" /><rect x="9" y="14" width="11" height="8" fill="#fff" /><path d="M11 15v6M15 15v4h4M18 15v6" stroke="#aaa" /></svg>
        </ImeSlot>
        <ImeSlot $w={27}>
          <svg width="20" height="20" viewBox="0 0 20 20"><path d="M6 0c2 2 6 2 8 0l6 4-2 5-3-1v12H5V8L2 9 0 4z" fill="#12b5cb" /></svg>
        </ImeSlot>
        <ImeSlot $w={31}>
          <svg width="16" height="18" viewBox="0 0 16 18"><rect width="7" height="8" rx="2" fill="#12b5cb" /><rect x="9" width="7" height="8" rx="2" fill="#12b5cb" /><rect y="10" width="7" height="8" rx="2" fill="#12b5cb" /><rect x="9" y="10" width="7" height="8" rx="2" fill="#12b5cb" /></svg>
        </ImeSlot>
      </IME>

      <Annotation width="1920" height="1039" viewBox="0 0 1920 1039">
        <path d="M500.500 237.500L523 245l-9 7 61.500 54-67-47-4 2z" fill="#fb3c3c" />
        <path d="M354.500 313L376.500 300l1 7.500 178 6.500-178 1.500-1 7z" fill="#fb3c3c" />
        <g fontFamily="Liberation Sans" fontWeight="700" fill="rgba(255,255,255,.35)" stroke="rgba(170,170,170,.55)" strokeWidth="1.400">
          <text x="1475" y="942" fontSize="82" textLength="115" lengthAdjust="spacingAndGlyphs">Bai</text>
          <ellipse cx="1629" cy="853" rx="12" ry="18" />
          <ellipse cx="1660" cy="854" rx="13" ry="17" transform="rotate(-12 1660 854)" />
          <ellipse cx="1605" cy="877" rx="12" ry="17" transform="rotate(-20 1605 877)" />
          <ellipse cx="1680" cy="884" rx="12" ry="18" transform="rotate(-20 1680 884)" />
          <path d="M1640 878c16 0 20 14 30 24 10 9 16 18 15 26-2 12-14 15-24 15-8 0-14-4-21-4s-13 4-22 4c-11 0-20-5-20-17 0-8 6-16 14-24 11-10 12-24 28-24z" />
          <text x="1640" y="935" fontSize="42" textAnchor="middle">du</text>
          <text x="1695" y="938" fontSize="58" textLength="117" fontFamily="Noto Sans CJK SC">经验</text>
          <text x="1473" y="987" fontSize="41" textLength="344" fontWeight="400" fontFamily="Lato">jingyan.baidu.com</text>
        </g>
      </Annotation>
      <AnnotationLabel>使用公式计算</AnnotationLabel>
    </Page>
  );
}
